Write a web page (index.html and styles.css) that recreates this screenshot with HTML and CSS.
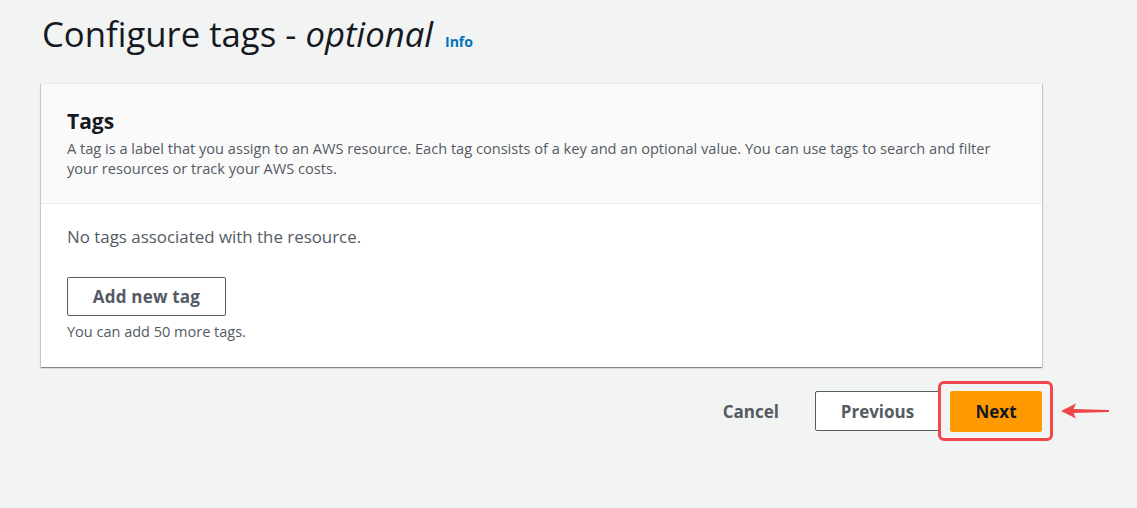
FILE: index.html
```html
<!DOCTYPE html>
<html lang="en">
<head>
<meta charset="utf-8">
<title>Configure tags</title>
<link rel="stylesheet" href="styles.css">
</head>
<body>
<main class="page">
  <header class="page-header">
    <h1 class="title">Configure tags - <em>optional</em></h1>
    <a class="info" href="#">Info</a>
  </header>

  <section class="card">
    <div class="card-header">
      <h2 class="card-title">Tags</h2>
      <p class="card-desc">A tag is a label that you assign to an AWS resource. Each tag consists of a key and an optional value. You can use tags to search and filter your resources or track your AWS costs.</p>
    </div>
    <div class="card-body">
      <p class="empty">No tags associated with the resource.</p>
      <button class="btn btn-normal btn-add" type="button">Add new tag</button>
      <p class="hint">You can add 50 more tags.</p>
    </div>
  </section>

  <footer class="actions">
    <button class="btn-link" type="button">Cancel</button>
    <button class="btn btn-normal btn-prev" type="button">Previous</button>
    <div class="highlight">
      <button class="btn btn-primary" type="button">Next</button>
    </div>
    <svg class="arrow" width="50" height="18" viewBox="0 0 50 18" aria-hidden="true">
      <path d="M1 9 L16 1.5 L13.5 7 L49 8.1 L49 9.9 L13.5 11 L16 16.5 Z" fill="#f0454a"/>
    </svg>
  </footer>
</main>
</body>
</html>
```

FILE: styles.css
```css
* { box-sizing: border-box; }

html, body {
  margin: 0;
  padding: 0;
  background: #f2f3f3;
}

body {
  font-family: "Open Sans", "Noto Sans", sans-serif;
  color: #16191f;
}

.page {
  width: 1042px;
  padding: 12px 0 0 41px;
}

.page-header {
  display: flex;
  align-items: baseline;
  gap: 12px;
  padding-left: 1px;
  height: 71px;
}

.title {
  margin: 0;
  font-size: 34.7px;
  font-weight: 400;
  line-height: 44px;
  color: #16191f;
}

.title em {
  font-style: italic;
}

.info {
  font-size: 14px;
  font-weight: 700;
  color: #0073bb;
  text-decoration: none;
}

.card {
  width: 1001px;
  background: #ffffff;
  box-shadow: 0 1px 1px 0 rgba(0, 28, 36, 0.3),
              1px 1px 1px 0 rgba(0, 28, 36, 0.15),
              -1px 1px 1px 0 rgba(0, 28, 36, 0.15);
  border-top: 1px solid #eaeded;
}

.card-header {
  background: #fafafa;
  border-bottom: 1px solid #eaeded;
  padding: 22px 26px 25px 26px;
}

.card-title {
  margin: 0;
  font-size: 21px;
  font-weight: 700;
  line-height: 30px;
  color: #16191f;
}

.card-desc {
  margin: 2px 0 0 0;
  font-size: 14.6px;
  line-height: 20px;
  color: #545b64;
}

.card-body {
  padding: 22px 26px 26px 26px;
}

.empty {
  margin: 0 0 29px 0;
  font-size: 16.9px;
  line-height: 22px;
  color: #545b64;
}

.btn {
  font-family: inherit;
  font-size: 17px;
  font-weight: 700;
  border-radius: 2px;
  cursor: pointer;
}

.btn-normal {
  background: #ffffff;
  border: 1px solid #545b64;
  color: #545b64;
  height: 39px;
  padding: 0;
}

.btn-add {
  width: 159px;
  letter-spacing: 0.2px;
}

.hint {
  margin: 7px 0 0 0;
  font-size: 14.5px;
  line-height: 18px;
  color: #545b64;
}

.actions {
  display: flex;
  align-items: center;
  justify-content: flex-end;
  width: 1069px;
  margin-top: 14px;
}

.btn-link {
  background: none;
  border: none;
  font-family: inherit;
  font-size: 17px;
  font-weight: 700;
  color: #545b64;
  padding: 0 36px 0 0;
  cursor: pointer;
}

.btn-prev {
  width: 125px;
  height: 40px;
  margin-right: -2px;
  font-size: 17px;
}

.highlight {
  border: 3px solid #f0484c;
  border-radius: 6px;
  padding: 7px 8px 6px 9px;
  display: flex;
}

.btn-primary {
  background: #ff9900;
  border: 1px solid #ff9900;
  color: #16191f;
  width: 92px;
  height: 41px;
  padding: 0;
}

.arrow {
  margin-left: 7px;
  flex: none;
}
```
